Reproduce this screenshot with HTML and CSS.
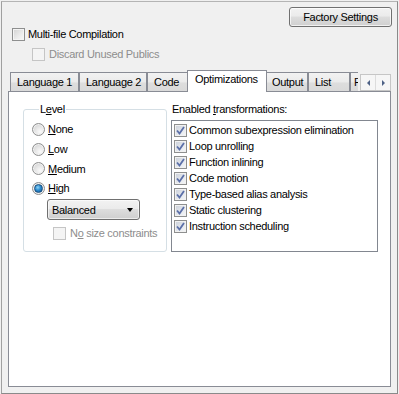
FILE: index.html
```html
<!DOCTYPE html>
<html>
<head>
<meta charset="utf-8">
<link rel="stylesheet" href="styles.css">
</head>
<body>
<div class="frame">
  <div class="toprow"><button class="btn factory">Factory Settings</button></div>
  <div class="cbrow main"><span class="cb"></span><span>Multi-file Compilation</span></div>
  <div class="cbrow sub disabled"><span class="cb dis"></span><span>Discard Unused Publics</span></div>
  <div class="tabstrip">
    <div class="tabs">
      <div class="tab w-l1">Language 1</div>
      <div class="tab w-l2">Language 2</div>
      <div class="tab w-code">Code</div>
      <div class="tab sel w-opt">Optimizations</div>
      <div class="tab w-out">Output</div>
      <div class="tab w-list">List</div>
      <div class="tab w-p">P</div>
    </div>
    <div class="arrows">
      <span class="arr"><span class="tri-l"></span></span>
      <span class="arr"><span class="tri-r"></span></span>
    </div>
  </div>
  <div class="panel">
    <fieldset class="group">
      <legend>L<u>e</u>vel</legend>
      <div class="radio r1"><span class="rb"></span><span><u>N</u>one</span></div>
      <div class="radio r2"><span class="rb"></span><span><u>L</u>ow</span></div>
      <div class="radio r3"><span class="rb"></span><span><u>M</u>edium</span></div>
      <div class="radio r4"><span class="rb on"></span><span><u>H</u>igh</span></div>
      <div class="combo"><span>Balanced</span><span class="caret"></span></div>
      <div class="cbrow nosize disabled"><span class="cb dis"></span><span>N<u>o</u> size constraints</span></div>
    </fieldset>
    <div class="trans">
      <div class="tlabel">Enabled <u>t</u>ransformations:</div>
      <div class="listbox">
        <div class="item"><span class="cb chk"><svg viewBox="0 0 11 11" width="11" height="11"><path d="M2 5.5 L4.5 8.5 L9 2" fill="none" stroke="#5b6fa8" stroke-width="1.8"/></svg></span><span>Common subexpression elimination</span></div>
        <div class="item"><span class="cb chk"><svg viewBox="0 0 11 11" width="11" height="11"><path d="M2 5.5 L4.5 8.5 L9 2" fill="none" stroke="#5b6fa8" stroke-width="1.8"/></svg></span><span>Loop unrolling</span></div>
        <div class="item"><span class="cb chk"><svg viewBox="0 0 11 11" width="11" height="11"><path d="M2 5.5 L4.5 8.5 L9 2" fill="none" stroke="#5b6fa8" stroke-width="1.8"/></svg></span><span>Function inlining</span></div>
        <div class="item"><span class="cb chk"><svg viewBox="0 0 11 11" width="11" height="11"><path d="M2 5.5 L4.5 8.5 L9 2" fill="none" stroke="#5b6fa8" stroke-width="1.8"/></svg></span><span>Code motion</span></div>
        <div class="item"><span class="cb chk"><svg viewBox="0 0 11 11" width="11" height="11"><path d="M2 5.5 L4.5 8.5 L9 2" fill="none" stroke="#5b6fa8" stroke-width="1.8"/></svg></span><span>Type-based alias analysis</span></div>
        <div class="item"><span class="cb chk"><svg viewBox="0 0 11 11" width="11" height="11"><path d="M2 5.5 L4.5 8.5 L9 2" fill="none" stroke="#5b6fa8" stroke-width="1.8"/></svg></span><span>Static clustering</span></div>
        <div class="item"><span class="cb chk"><svg viewBox="0 0 11 11" width="11" height="11"><path d="M2 5.5 L4.5 8.5 L9 2" fill="none" stroke="#5b6fa8" stroke-width="1.8"/></svg></span><span>Instruction scheduling</span></div>
      </div>
    </div>
  </div>
</div>
</body>
</html>
```

FILE: styles.css
```css
* { box-sizing: border-box; }
html, body { margin: 0; padding: 0; background: #f0f0f0; }
body {
  font-family: "Liberation Sans", Arial, sans-serif;
  font-size: 11px;
  letter-spacing: -0.3px;
  color: #000;
}
u { text-decoration: underline; text-underline-offset: 1px; }

.frame {
  margin: 1px;
  width: 397px;
  height: 393px;
  border: 1px solid #8a8a8a;
  border-top-color: #b4b4b4;
  border-left-color: #a0a0a0;
  background: #f0f0f0;
  display: flex;
  flex-direction: column;
}

.toprow {
  display: flex;
  justify-content: flex-end;
  padding: 5px 5px 0 0;
}
.btn {
  font: inherit;
  letter-spacing: inherit;
  color: #000;
  border: 1px solid #707070;
  border-radius: 3px;
  background: linear-gradient(#f2f2f2 0%, #ebebeb 45%, #dddddd 50%, #cfcfcf 100%);
  box-shadow: inset 0 0 0 1px rgba(255,255,255,0.7);
  padding: 0;
}
.factory { width: 103px; height: 20px; }

.cbrow {
  display: flex;
  align-items: center;
  height: 13px;
  line-height: 13px;
  gap: 3px;
}
.cbrow.main { margin: 1px 0 0 10px; }
.cbrow.sub { margin: 7px 0 0 30px; gap: 4px; }
.disabled { color: #8d8d8d; }

.cb {
  width: 13px;
  height: 13px;
  flex: none;
  border: 1px solid #8e8f8f;
  background: linear-gradient(135deg, #d2d2d2 0%, #ececec 60%, #f8f8f8 100%);
  box-shadow: inset 0 0 0 1px #f4f4f4;
  display: flex;
  align-items: center;
  justify-content: center;
}
.cb.dis {
  border-color: #c5c5c5;
  background: #f4f4f4;
  box-shadow: none;
}
.cb.chk {
  background: linear-gradient(135deg, #c9ced8 0%, #e6e9ee 60%, #f6f7f9 100%);
  box-shadow: inset 0 0 0 1px #f1f1f1;
}
.cb svg { display: block; }

.tabstrip {
  margin-top: 9px;
  height: 21px;
  display: flex;
  align-items: flex-end;
}
.tabs {
  margin-left: 8px;
  width: 348px;
  height: 22px;
  margin-bottom: -1px;
  display: flex;
  align-items: flex-end;
  overflow: hidden;
  position: relative;
  z-index: 1;
}
.tab {
  flex: none;
  height: 19px;
  margin-bottom: 1px;
  border: 1px solid #898c95;
  border-bottom: none;
  background: linear-gradient(#f2f2f2 0%, #ebebeb 50%, #dddddd 55%, #d9d9d9 100%);
  padding-left: 6px;
  line-height: 18px;
  white-space: nowrap;
  overflow: hidden;
}
.tab.sel {
  height: 22px;
  margin: 0 -2px 0 -2px;
  background: #fff;
  line-height: 17px;
  padding-left: 7px;
  position: relative;
  z-index: 2;
}
.w-l1 { width: 69px; }
.w-l2 { width: 68px; }
.w-code { width: 42px; }
.w-opt { width: 80px; }
.w-out { width: 43px; }
.w-list { width: 42px; }
.w-p { width: 14px; padding-left: 3px; }

.arrows {
  margin-left: 2px;
  width: 31px;
  height: 17px;
  display: flex;
  border: 1px solid #c6c6c6;
  background: #f6f6f6;
}
.arr {
  flex: 1;
  display: flex;
  align-items: center;
  justify-content: center;
}
.arr + .arr { border-left: 1px solid #dcdcdc; }
.tri-l {
  width: 0; height: 0;
  border-top: 3px solid transparent;
  border-bottom: 3px solid transparent;
  border-right: 3px solid #4d6185;
}
.tri-r {
  width: 0; height: 0;
  border-top: 3px solid transparent;
  border-bottom: 3px solid transparent;
  border-left: 3px solid #4d6185;
}

.panel {
  margin: 0 6px 6px 6px;
  flex: 1;
  border: 1px solid #898c95;
  background: #fff;
  display: flex;
  align-items: flex-start;
  padding: 11px 0 0 14px;
}

.group {
  margin: 0;
  width: 144px;
  height: 149px;
  border: 1px solid #d5dfe5;
  border-radius: 3px;
  padding: 3px 0 0 8px;
  min-width: 0;
}
.group legend {
  padding: 0 1px;
  margin-left: 7px;
  line-height: 13px;
}
.radio {
  display: flex;
  align-items: center;
  height: 20px;
  gap: 3px;
}
.radio.r3 { height: 19px; }
.rb {
  width: 13px;
  height: 13px;
  flex: none;
  border-radius: 50%;
  border: 1px solid #8e8f8f;
  background: radial-gradient(circle at 65% 70%, #fbfbfb 0%, #e6e6e6 45%, #c8c8c8 100%);
  box-shadow: inset 0 0 0 1px #f2f2f2;
  display: flex;
  align-items: center;
  justify-content: center;
}
.rb.on::after {
  content: "";
  width: 7px;
  height: 7px;
  border-radius: 50%;
  background: radial-gradient(circle at 40% 35%, #8fd4f6 0%, #2b8cd0 45%, #114f8c 100%);
  border: 1px solid #1c5180;
}

.combo {
  margin: 1px 0 0 15px;
  width: 93px;
  height: 21px;
  border: 1px solid #707070;
  border-radius: 3px;
  background: linear-gradient(#f2f2f2 0%, #ebebeb 45%, #dddddd 50%, #cfcfcf 100%);
  box-shadow: inset 0 0 0 1px rgba(255,255,255,0.6);
  display: flex;
  align-items: center;
  justify-content: space-between;
  padding: 0 4px 0 4px;
}
.caret {
  width: 0; height: 0;
  border-left: 3.5px solid transparent;
  border-right: 3.5px solid transparent;
  border-top: 4px solid #000;
  margin-right: 2px;
}
.cbrow.nosize { margin: 7px 0 0 21px; gap: 4px; }

.trans {
  margin-left: 4px;
  display: flex;
  flex-direction: column;
}
.tlabel {
  line-height: 13px;
  padding-left: 1px;
}
.listbox {
  margin-top: 4px;
  width: 207px;
  height: 132px;
  border: 1px solid #828790;
  background: #fff;
  padding: 1px 0 0 2px;
}
.item {
  display: flex;
  align-items: center;
  height: 16px;
  gap: 2px;
}
```
